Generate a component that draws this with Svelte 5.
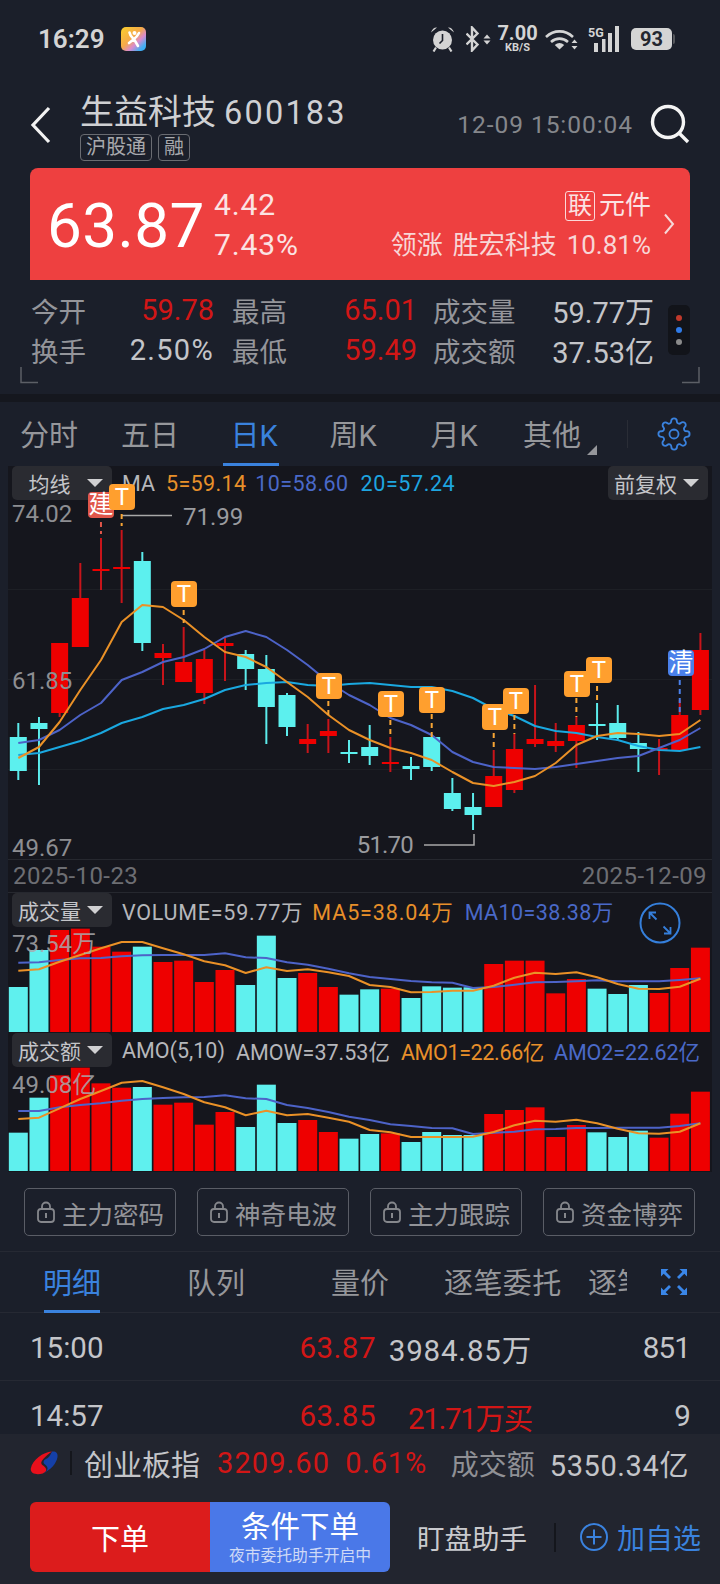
<script lang="ts">
	// x of the nth candle, shared by all three chart panels
	const cx = (i: number) => 18.3 + 20.67 * i;

	// hi, lo, bodyTop, bodyBottom, up
	const candles = [
		[723, 780, 737, 771, 0],
		[717, 785, 723, 729, 0],
		[643, 717, 643, 713, 1],
		[563, 647, 598, 647, 1],
		[538, 590, 569, 571, 1],
		[530, 603, 567, 569, 1],
		[552, 651, 561, 643, 0],
		[644, 685, 653, 658, 1],
		[627, 682, 662, 682, 1],
		[650, 704, 659, 693, 1],
		[638, 681, 643, 646, 1],
		[650, 690, 654, 669, 0],
		[655, 744, 669, 707, 0],
		[693, 736, 695, 727, 0],
		[724, 753, 739, 744, 1],
		[719, 753, 731, 736, 1],
		[740, 763, 752, 754, 0],
		[725, 765, 747, 756, 0],
		[737, 772, 762, 764, 1],
		[757, 780, 766, 769, 0],
		[737, 771, 737, 767, 0],
		[778, 811, 793, 809, 0],
		[793, 830, 807, 815, 0],
		[750, 807, 776, 807, 1],
		[734, 793, 749, 790, 1],
		[685, 747, 739, 744, 1],
		[723, 752, 741, 746, 1],
		[717, 768, 725, 741, 1],
		[703, 740, 724, 726, 0],
		[705, 741, 723, 738, 0],
		[732, 772, 743, 749, 0],
		[739, 775, 748, 750, 1],
		[700, 750, 715, 750, 1],
		[633, 715, 650, 710, 1]
	];

	const ma5 = [758, 747, 722, 690, 660, 622, 605, 607, 620, 637, 652, 657, 667, 682, 697, 715, 730, 740, 748, 753, 760, 772, 783, 786, 782, 776, 763, 745, 736, 733, 734, 736, 734, 720];
	const ma10 = [743, 740, 730, 715, 703, 680, 672, 662, 657, 649, 637, 631, 637, 650, 665, 682, 695, 705, 718, 725, 735, 752, 762, 767, 768, 769, 767, 764, 761, 758, 756, 748, 740, 728];
	const ma20 = [755, 753, 747, 741, 733, 723, 717, 709, 705, 699, 690, 685, 683, 682, 685, 686, 684, 683, 685, 687, 687, 691, 698, 709, 716, 726, 731, 733, 737, 740, 746, 750, 751, 747];

	const volTops = [291, 180, 120, 116, 170, 185, 170, 216, 212, 276, 240, 285, 137, 264, 249, 291, 314, 298, 296, 324, 289, 293, 292, 222, 212, 212, 310, 267, 296, 312, 285, 309, 234, 173];
	const volMa5 = [242, 238, 215, 195, 175, 156, 156, 175, 193, 214, 226, 249, 232, 243, 238, 247, 258, 285, 291, 307, 306, 302, 302, 287, 263, 248, 252, 247, 262, 282, 296, 297, 290, 266];
	const volMa10 = [218, 217, 210, 205, 204, 199, 196, 195, 195, 195, 190, 202, 204, 217, 224, 236, 250, 261, 267, 273, 277, 278, 294, 291, 284, 277, 276, 274, 271, 274, 274, 274, 270, 265];

	const amoTops = [728, 623, 556, 533, 580, 593, 591, 644, 638, 704, 666, 711, 584, 699, 690, 726, 746, 732, 730, 756, 726, 735, 735, 672, 660, 652, 741, 705, 727, 741, 722, 743, 671, 605];
	const amoMa1 = [687, 683, 655, 627, 603, 578, 573, 592, 612, 637, 652, 676, 662, 676, 672, 683, 695, 720, 727, 741, 741, 741, 740, 726, 706, 692, 695, 689, 700, 716, 730, 731, 725, 700];
	const amoMa2 = [663, 663, 652, 645, 640, 632, 627, 624, 622, 621, 616, 625, 627, 645, 654, 666, 680, 690, 703, 708, 714, 715, 732, 728, 725, 718, 717, 714, 714, 713, 713, 713, 708, 700];

	// trade markers on the candle chart: label, box x, box y, dash from, dash to
	const marks = [
		{ t: '建', x: 88, y: 492, i: 4, a: 522, b: 534, kind: 'jian' },
		{ t: 'T', x: 109, y: 484, i: 5, a: 514, b: 526, kind: 'tee' },
		{ t: 'T', x: 171, y: 581, i: 8, a: 610, b: 623, kind: 'tee' },
		{ t: 'T', x: 316, y: 673, i: 15, a: 701, b: 719, kind: 'tee' },
		{ t: 'T', x: 378, y: 691, i: 18, a: 720, b: 737, kind: 'tee' },
		{ t: 'T', x: 419, y: 687, i: 20, a: 714, b: 737, kind: 'tee' },
		{ t: 'T', x: 503, y: 688, i: 24, a: 715, b: 734, kind: 'tee' },
		{ t: 'T', x: 482, y: 704, i: 23, a: 733, b: 750, kind: 'tee' },
		{ t: 'T', x: 564, y: 671, i: 27, a: 698, b: 717, kind: 'tee' },
		{ t: 'T', x: 586, y: 657, i: 28, a: 686, b: 703, kind: 'tee' },
		{ t: '清', x: 668, y: 650, i: 32, a: 680, b: 715, kind: 'qing' }
	];

	const pts = (arr: number[], fy = (v: number) => v) => arr.map((v, i) => `${cx(i).toFixed(1)},${fy(v).toFixed(1)}`).join(' ');
	const zy = (z: number) => 890 + z / 3;
	const isUp = (i: number) => candles[i][4] === 1;

	const locks = ['主力密码', '神奇电波', '主力跟踪', '资金博弈'];
	const periods = [
		{ t: '分时', w: 58, l: 20 },
		{ t: '五日', w: 58, l: 121 },
		{ t: '日K', w: 48, l: 230, on: true },
		{ t: '周K', w: 50, l: 328 },
		{ t: '月K', w: 50, l: 429 },
		{ t: '其他', w: 58, l: 523 }
	];
</script>

<div class="page">
	<div class="status">
		<span class="clock">16:29</span>
		<svg class="appIcon" viewBox="0 0 25 24" width="25" height="24">
			<defs>
				<linearGradient id="appg" x1="0" y1="0" x2="1" y2="1">
					<stop offset="0" stop-color="#fbd02c" />
					<stop offset="0.45" stop-color="#f5a94a" />
					<stop offset="0.65" stop-color="#d98ad0" />
					<stop offset="0.85" stop-color="#45aef2" />
					<stop offset="1" stop-color="#2fa8f5" />
				</linearGradient>
			</defs>
			<rect width="25" height="24" rx="5" fill="url(#appg)" />
			<path d="M8.500 5.500c.5 3.500 3 5 5 7.500l3.500 6M18 6c-1.500 3-3.500 5-5.500 6.500L8 16" fill="none" stroke="#fff" stroke-width="2.600" stroke-linecap="round" />
			<circle cx="13.500" cy="6" r="2" fill="#fff" />
		</svg>
		<span class="spring"></span>
		<svg class="alarm" viewBox="0 0 25 26" width="25" height="26">
			<circle cx="12.500" cy="14" r="9.500" fill="#d4d4d4" />
			<path d="M12.500 8v6.500l-3 3" fill="none" stroke="#1b1f2a" stroke-width="1.600" />
			<path d="M1 6.500C2 3 4.500 1.200 7 1.500zM24 6.500C23 3 20.500 1.200 18 1.500z" fill="#d4d4d4" />
			<path d="M6 21.500L3.500 25.500M19 21.500l2.500 4" stroke="#d4d4d4" stroke-width="2.200" fill="none" />
		</svg>
		<svg class="bt" viewBox="0 0 25 26" width="25" height="26">
			<path d="M0.500 7.500l11 11-5.500 6V1.500l5.500 6-11 11" fill="none" stroke="#d4d4d4" stroke-width="2.400" />
			<path d="M21 8.500l3.500 4h-7zM21 18.500l3.500-4h-7z" fill="#d4d4d4" />
		</svg>
		<span class="speed"><b>7.00</b><i>KB/S</i></span>
		<svg class="wifi" viewBox="0 0 33 20" width="33" height="20">
			<path d="M1 7c8-7.500 19-7.500 27 0M6 12c5-4.500 12-4.500 17 0" fill="none" stroke="#d4d4d4" stroke-width="2.600" />
			<path d="M14.500 19.500L9.800 15c3-2.700 6.400-2.700 9.400 0z" fill="#d4d4d4" />
			<path d="M29.500 9.500l3 3.500h-6zM29.500 19.500l3-3.500h-6z" fill="#d4d4d4" />
		</svg>
		<svg class="signal" viewBox="0 0 32 26" width="32" height="26">
			<text x="0" y="11" class="fiveG">5G</text>
			<rect x="6" y="17" width="4" height="9" fill="#d4d4d4" />
			<rect x="14" y="13" width="3.500" height="13" fill="#d4d4d4" />
			<rect x="20" y="7" width="4" height="19" fill="#d4d4d4" />
			<rect x="27" y="0" width="4" height="26" fill="#d4d4d4" />
		</svg>
		<span class="battery">93</span>
	</div>

	<div class="head">
		<svg class="back" viewBox="0 0 22 38" width="22" height="38">
			<path d="M19 2L3 19l16 17" fill="none" stroke="#f2f2f2" stroke-width="3.200" />
		</svg>
		<div class="title">
			<div class="name">生益科技<span>600183</span></div>
			<div class="tags"><em>沪股通</em><em>融</em></div>
		</div>
		<span class="stamp">12-09 15:00:04</span>
		<svg class="search" viewBox="0 0 40 40" width="40" height="40">
			<circle cx="18" cy="18" r="15.500" fill="none" stroke="#f4f4f4" stroke-width="3.400" />
			<path d="M29 29l9 9" stroke="#f4f4f4" stroke-width="3.400" />
		</svg>
	</div>

	<div class="quote">
		<span class="last">63.87</span>
		<div class="chg"><span>4.42</span><span>7.43%</span></div>
		<div class="sector">
			<div class="sectorTop"><em>联</em>元件</div>
			<div class="sectorLead">领涨 胜宏科技 10.81%</div>
		</div>
		<svg class="chev" viewBox="0 0 12 22" width="12" height="22">
			<path d="M2 1.500l8 9.500-8 9.500" fill="none" stroke="#f6d8d8" stroke-width="2" />
		</svg>
	</div>

	<div class="stats">
		<div class="grid">
			<span class="lab">今开</span><span class="num red">59.78</span>
			<span class="lab p18">最高</span><span class="num red">65.01</span>
			<span class="lab p16">成交量</span><span class="num">59.77万</span>
			<span class="lab">换手</span><span class="num wide">2.50%</span>
			<span class="lab p18">最低</span><span class="num red">59.49</span>
			<span class="lab p16">成交额</span><span class="num">37.53亿</span>
		</div>
		<div class="dots"><i class="d1"></i><i class="d2"></i><i class="d3"></i></div>
		<svg class="corner left" viewBox="0 0 18 17" width="18" height="17"><path d="M1 0v15.500h17" fill="none" stroke="#5c5f66" stroke-width="1.500" /></svg>
		<svg class="corner right" viewBox="0 0 18 17" width="18" height="17"><path d="M17 0v15.500H0" fill="none" stroke="#5c5f66" stroke-width="1.500" /></svg>
	</div>

	<div class="strip"></div>

	<div class="periods">
		{#each periods as p}
			<span class="period" class:on={p.on} style={`left:${p.l}px;width:${p.w}px`}>{p.t}</span>
		{/each}
		<i class="more"></i>
		<i class="vsep"></i>
		<svg class="gear" viewBox="0 0 24 24" width="34" height="34">
			<path
				d="M12 8.800a3.200 3.200 0 1 0 0 6.400 3.200 3.200 0 0 0 0-6.400zM19.400 15a1.650 1.650 0 0 0 .33 1.820l.06.06a2 2 0 1 1-2.830 2.830l-.06-.06a1.650 1.650 0 0 0-2.800 1.170V21a2 2 0 0 1-4 0v-.09A1.650 1.650 0 0 0 7.300 19.700l-.06.06a2 2 0 1 1-2.830-2.830l.06-.06A1.650 1.650 0 0 0 3.290 14H3a2 2 0 0 1 0-4h.09A1.650 1.650 0 0 0 4.600 7.300l-.06-.06a2 2 0 1 1 2.830-2.830l.06.06A1.650 1.650 0 0 0 10 3.290V3a2 2 0 0 1 4 0v.09a1.650 1.650 0 0 0 2.800 1.170l.06-.06a2 2 0 1 1 2.830 2.830l-.06.06A1.650 1.650 0 0 0 20.910 10H21a2 2 0 0 1 0 4h-.09a1.650 1.650 0 0 0-1.510 1z"
				fill="none"
				stroke="#3a82de"
				stroke-width="1.300"
			/>
		</svg>
	</div>

	<div class="charts">
		<div class="panel main">
			<div class="legend">
				<span class="drop"><em>均线</em><i></i></span>
				<span class="w ml">MA</span>
				<span class="o s11 ls3">5=59.14</span>
				<span class="b s9 ls4">10=58.60</span>
				<span class="c s12 ls6">20=57.24</span>
				<span class="spring"></span>
				<span class="drop adj"><em>前复权</em><i></i></span>
			</div>
			<svg viewBox="8 466 704 394" width="704" height="394">
				<line x1="8" y1="589.500" x2="712" y2="589.500" class="gridline" />
				<line x1="8" y1="679.500" x2="712" y2="679.500" class="gridline" />
				<line x1="8" y1="769.500" x2="712" y2="769.500" class="gridline" />
				{#each candles as c, i}
					<line x1={cx(i)} x2={cx(i)} y1={c[0]} y2={c[1]} stroke={c[4] ? '#c8141a' : '#5cecec'} stroke-width="2" />
					<rect x={cx(i) - 8.500} y={c[2]} width="17" height={c[3] - c[2]} fill={c[4] ? '#ee0000' : '#5cf0ee'} />
				{/each}
				<polyline points={pts(ma20)} class="ln" stroke="#1aa8e0" />
				<polyline points={pts(ma10)} class="ln" stroke="#4d63c8" />
				<polyline points={pts(ma5)} class="ln" stroke="#ea9127" />
				<text x="12" y="522" class="axis">74.02</text>
				<text x="12" y="689" class="axis">61.85</text>
				<text x="12" y="856" class="axis">49.67</text>
				<path d="M122 515.500h50" class="tick" />
				<text x="183" y="525" class="axis hl">71.99</text>
				<path d="M424 845h50v-11" class="tick" />
				<text x="413" y="853" class="axis hl tight" text-anchor="end">51.70</text>
				{#each marks as m}
					<line x1={cx(m.i)} x2={cx(m.i)} y1={m.a} y2={m.b} class="dash {m.kind}" />
				{/each}
				{#each marks as m}
					<rect x={m.x} y={m.y} width="26" height="26" rx="4" class="badge {m.kind}" />
					<text x={m.x + 13} y={m.y + 21} class="badgeText" class:cjk={m.t !== 'T'}>{m.t}</text>
				{/each}
			</svg>
		</div>

		<div class="dates"><span>2025-10-23</span><span>2025-12-09</span></div>

		<div class="panel sub">
			<div class="legend">
				<span class="drop"><em>成交量</em><i></i></span>
				<span class="w ml ls8">VOLUME=59.77万</span>
				<span class="o s9 ls9">MA5=38.04万</span>
				<span class="b s11 ls4">MA10=38.38万</span>
			</div>
			<svg viewBox="8 893 704 139" width="704" height="139">
				{#each volTops as z, i}
					<rect x={cx(i) - 9.500} y={zy(z)} width="19" height={1032 - zy(z)} class={isUp(i) ? 'barUp' : 'barDown'} />
				{/each}
				<polyline points={pts(volMa10, zy)} class="ln" stroke="#4d63c8" />
				<polyline points={pts(volMa5, zy)} class="ln" stroke="#ea9127" />
				<text x="12" y="952" class="axis over">73.54万</text>
			</svg>
			<svg class="zoomOut" viewBox="0 0 42 42" width="42" height="42">
				<circle cx="21" cy="21" r="19.500" fill="none" stroke="#357fdb" stroke-width="2" />
				<path d="M10.500 10.500l7 7M10.500 17v-6.500h6.500M31.500 31.500l-7-7M31.500 25v6.500h-6.500" fill="none" stroke="#357fdb" stroke-width="1.800" />
			</svg>
		</div>

		<div class="panel sub amo">
			<div class="legend">
				<span class="drop"><em>成交额</em><i></i></span>
				<span class="w ml">AMO(5,10)</span>
				<span class="w s11">AMOW=37.53亿</span>
				<span class="o s11 lsn">AMO1=22.66亿</span>
				<span class="b s10 lsm">AMO2=22.62亿</span>
			</div>
			<svg viewBox="8 1033 704 139" width="704" height="139">
				{#each amoTops as z, i}
					<rect x={cx(i) - 9.500} y={zy(z)} width="19" height={1171 - zy(z)} class={isUp(i) ? 'barUp' : 'barDown'} />
				{/each}
				<polyline points={pts(amoMa2, zy)} class="ln" stroke="#4d63c8" />
				<polyline points={pts(amoMa1, zy)} class="ln" stroke="#ea9127" />
				<text x="12" y="1093" class="axis over">49.08亿</text>
			</svg>
		</div>
	</div>

	<div class="locks">
		{#each locks as l}
			<div class="lock">
				<svg viewBox="0 0 18 22" width="18" height="22">
					<rect x="1" y="8" width="16" height="13" rx="3" fill="none" stroke="#85878c" stroke-width="1.800" />
					<path d="M5 8V5.500a4 4 0 0 1 8 0V8" fill="none" stroke="#85878c" stroke-width="1.800" />
					<rect x="8" y="12" width="2" height="5" fill="#85878c" />
				</svg>
				<span>{l}</span>
			</div>
		{/each}
	</div>

	<div class="detailTabs">
		<span class="dt on">明细</span>
		<span class="dt tab2">队列</span>
		<span class="dt tab3">量价</span>
		<span class="dt tab4">逐笔委托</span>
		<span class="dt tab5">逐笔成交</span>
		<svg class="expand" viewBox="0 0 28 28" width="28" height="28">
			<path d="M1 1h7.500L5.800 3.700 11 9 9 11 3.700 5.800 1 8.500zM27 1v7.500l-2.700-2.700L19 11l-2-2 5.300-5.300L19.500 1zM1 27v-7.500l2.700 2.700L9 17l2 2-5.300 5.300L8.500 27zM27 27h-7.500l2.700-2.700L17 19l2-2 5.300 5.300 2.700-2.800z" fill="#3a86e8" />
		</svg>
	</div>

	<div class="rows">
		<div class="row">
			<span class="tm">15:00</span>
			<span class="px red">63.87</span>
			<span class="amt">3984.85万</span>
			<span class="cnt">851</span>
		</div>
		<div class="row">
			<span class="tm">14:57</span>
			<span class="px red">63.85</span>
			<span class="amt red tight">21.71万买</span>
			<span class="cnt">9</span>
		</div>
	</div>

	<div class="dock">
		<div class="ticker">
			<svg class="logo" viewBox="0 0 28 24" width="28" height="24">
				<path d="M22 .5C13 1 2.500 9 .8 17.500c-.8 5 5.500 7 12 5 6-2.500 3-6.500-.5-8.500-3-2 .5-7 9.700-13.500z" fill="#e8101c" />
				<path d="M22 .5c4-.4 6 1.500 5.500 5.500-1 6.500-7 13-14.500 16.500 6-3 5.500-6.500 2-9-2.500-1.800-1.500-4.500 1-5.500 2.500-1 4.500-4 6-7.500z" fill="#1540a8" />
			</svg>
			<i class="logoSep"></i>
			<span class="idx">创业板指</span>
			<span class="idxVal red">3209.60</span>
			<span class="idxPct red">0.61%</span>
			<span class="spring"></span>
			<span class="idxLab">成交额</span>
			<span class="idxAmt">5350.34亿</span>
		</div>
		<div class="actions">
			<div class="buy">下单</div>
			<div class="cond">
				<span class="condMain">条件下单</span>
				<span class="condSub">夜市委托助手开启中</span>
			</div>
			<span class="watch">盯盘助手</span>
			<i class="actSep"></i>
			<svg class="plus" viewBox="0 0 28 28" width="28" height="28">
				<circle cx="14" cy="14" r="13" fill="none" stroke="#3a82de" stroke-width="2" />
				<path d="M14 6.500v15M6.500 14h15" stroke="#3a82de" stroke-width="2" />
			</svg>
			<span class="addFav">加自选</span>
		</div>
	</div>
</div>

<style>
	:global(body) {
		margin: 0;
		background: #1b1f2a;
	}

	.page {
		position: relative;
		width: 720px;
		height: 1584px;
		overflow: hidden;
		background: #1b1f2a;
		color: #c9cace;
		font-family: Roboto, 'Noto Sans CJK SC', sans-serif;
		display: flex;
		flex-direction: column;
	}

	em,
	i {
		font-style: normal;
	}

	.spring {
		flex: 1;
	}

	.red {
		color: #d21616;
	}

	.status {
		height: 80px;
		flex: none;
		display: flex;
		align-items: center;
		padding: 0 48px 2px 38px;
		box-sizing: border-box;
		position: relative;
	}

	.clock {
		font-size: 26px;
		font-weight: 600;
		color: #d4d4d4;
		width: 83px;
	}

	.alarm {
		margin-right: 11px;
	}

	.bt {
		margin-right: 8px;
	}

	.speed {
		display: flex;
		flex-direction: column;
		align-items: center;
		width: 37px;
		margin-right: 9px;
		color: #d4d4d4;
		line-height: 1;
	}

	.speed b {
		font-size: 20px;
		font-weight: 700;
		line-height: 17px;
	}

	.speed i {
		font-size: 11px;
		font-weight: 700;
		line-height: 11px;
	}

	.wifi {
		margin: 2px 10px 0 0;
	}

	.signal {
		margin-right: 11px;
	}

	.fiveG {
		font-size: 12.500px;
		font-weight: 700;
		fill: #d4d4d4;
	}

	.battery {
		width: 41px;
		height: 22px;
		border-radius: 5px;
		background: #d4d4d4;
		color: #23262f;
		font-size: 20px;
		font-weight: 700;
		line-height: 22px;
		text-align: center;
		position: relative;
	}

	.battery::after {
		content: '';
		position: absolute;
		left: 42px;
		top: 6px;
		width: 2px;
		height: 10px;
		background: #55575c;
		border-radius: 0 2px 2px 0;
	}

	.head {
		height: 88px;
		flex: none;
		display: flex;
		padding: 0 30px;
		position: relative;
	}

	.back {
		margin: 26px 28px 0 0;
	}

	.title {
		display: flex;
		flex-direction: column;
	}

	.name {
		font-size: 34px;
		line-height: 44px;
		margin-top: 10px;
		color: #cfd0d3;
	}

	.name span {
		font-size: 32.500px;
		margin-left: 8px;
		letter-spacing: 2.200px;
	}

	.tags {
		display: flex;
		gap: 6px;
		margin-top: -1px;
	}

	.tags em {
		border: 1px solid #6a6c72;
		border-radius: 4px;
		font-size: 20px;
		line-height: 25px;
		padding: 0 5px;
		color: #a8a9ad;
	}

	.stamp {
		margin: 30px 0 0 auto;
		font-size: 24.500px;
		line-height: 30px;
		height: 30px;
		color: #85878c;
		letter-spacing: 0.95px;
	}

	.search {
		margin: 24px 0 0 17px;
	}

	.quote {
		height: 112px;
		flex: none;
		margin: 0 30px;
		box-sizing: border-box;
		padding-left: 17px;
		border-radius: 8px 8px 0 0;
		background: #ee4040;
		color: #fff;
		display: flex;
		align-items: center;
	}

	.last {
		font-size: 62px;
		line-height: 1;
		width: 167px;
		letter-spacing: 0.4px;
		margin-top: 4px;
	}

	.chg {
		display: flex;
		flex-direction: column;
		font-size: 30px;
		line-height: 40px;
		color: #fbe3e3;
		letter-spacing: 0.9px;
		margin-top: 1px;
	}

	.sector {
		margin-left: auto;
		display: flex;
		flex-direction: column;
		align-items: flex-end;
		margin-right: 6px;
		color: #f8d6d6;
		margin-top: 2px;
	}

	.sectorTop {
		font-size: 26px;
		line-height: 40px;
		color: #fbe3e3;
	}

	.sectorTop em {
		display: inline-block;
		border: 1px solid #fbd9d9;
		border-radius: 3px;
		font-size: 24px;
		line-height: 28px;
		width: 28px;
		text-align: center;
		margin-right: 4px;
	}

	.sectorLead {
		font-size: 26px;
		line-height: 40px;
		word-spacing: 3.500px;
	}

	.chev {
		margin: 0 15px 0 6px;
	}

	.stats {
		height: 114px;
		flex: none;
		position: relative;
		padding-top: 10px;
		box-sizing: border-box;
	}

	.grid {
		display: grid;
		grid-template-columns: 86px 128px 75px 128px 99px 138px;
		grid-auto-rows: 40px;
		align-items: center;
	}

	.grid .lab:nth-child(6n + 1) {
		padding-left: 31px;
	}

	.lab {
		font-size: 27.500px;
		color: #94959a;
		white-space: nowrap;
	}

	.p18 {
		padding-left: 18px;
	}

	.p16 {
		padding-left: 16px;
	}

	.num {
		font-size: 29px;
		text-align: right;
		white-space: nowrap;
	}

	.num.wide {
		letter-spacing: 1.300px;
	}

	.num:not(.red) {
		color: #c4c5c9;
	}

	.dots {
		position: absolute;
		left: 668px;
		top: 25px;
		width: 22px;
		height: 50px;
		border-radius: 5px;
		background: #12141a;
	}

	.dots i {
		position: absolute;
		left: 8px;
		width: 6px;
		height: 6px;
		border-radius: 50%;
	}

	.d1 {
		top: 10px;
		background: #c0392b;
	}

	.d2 {
		top: 22px;
		background: #2f7be8;
	}

	.d3 {
		top: 34px;
		background: #8b8b8b;
	}

	.corner {
		position: absolute;
		top: 87px;
	}

	.corner.left {
		left: 20px;
	}

	.corner.right {
		left: 682px;
	}

	.strip {
		height: 8px;
		flex: none;
		background: #15171e;
	}

	.periods {
		position: relative;
		height: 64px;
		flex: none;
	}

	.period {
		position: absolute;
		top: 14px;
		font-size: 29px;
		line-height: 40px;
		text-align: center;
		color: #96979b;
		white-space: nowrap;
	}

	.period.on {
		color: #3a82de;
	}

	.period.on::after {
		content: '';
		position: absolute;
		left: -7px;
		right: -1px;
		top: 47px;
		height: 3px;
		background: #3a82de;
	}

	.more {
		position: absolute;
		left: 587px;
		top: 43px;
		border-left: 10px solid transparent;
		border-bottom: 10px solid #96979b;
	}

	.vsep {
		position: absolute;
		left: 627px;
		top: 18px;
		width: 1px;
		height: 28px;
		background: #2a2d36;
	}

	.gear {
		position: absolute;
		left: 657px;
		top: 15px;
	}

	.charts {
		flex: none;
		margin-left: 8px;
		width: 704px;
		background: #15161d;
		display: flex;
		flex-direction: column;
	}

	.panel {
		position: relative;
	}

	.panel svg {
		display: block;
		position: relative;
		overflow: visible;
	}

	.main {
		height: 394px;
		border-bottom: 1px solid #26282f;
		box-sizing: border-box;
	}

	.sub {
		height: 139px;
	}

	.amo {
		margin-top: 1px;
	}

	.legend {
		position: absolute;
		left: 4px;
		right: 4px;
		top: 0;
		height: 34px;
		display: flex;
		align-items: center;
		font-size: 21.500px;
		white-space: nowrap;
	}

	.sub .legend {
		top: 0;
	}

	.drop {
		display: flex;
		align-items: center;
		box-sizing: border-box;
		width: 100px;
		height: 34px;
		padding-right: 9px;
		border-radius: 5px;
		background: #2a2b31;
		color: #c4c5c9;
		font-size: 21px;
	}

	.drop em {
		flex: 1;
		text-align: center;
	}

	.drop i {
		border: 8px solid transparent;
		border-top: 8px solid #d0d0d2;
		border-bottom: 0;
	}

	.ml {
		margin-left: 10px;
	}

	.s9 {
		margin-left: 9px;
	}

	.s10 {
		margin-left: 10px;
	}

	.s11 {
		margin-left: 11px;
	}

	.s12 {
		margin-left: 12px;
	}

	.ls3 {
		letter-spacing: 0.35px;
	}

	.ls4 {
		letter-spacing: 0.4px;
	}

	.ls6 {
		letter-spacing: 0.6px;
	}

	.ls8 {
		letter-spacing: 0.75px;
	}

	.ls9 {
		letter-spacing: 0.9px;
	}

	.lsn {
		letter-spacing: -0.35px;
	}

	.lsm {
		letter-spacing: -0.1px;
	}

	.w {
		color: #b6b7bb;
	}

	.o {
		color: #e8902a;
	}

	.b {
		color: #4a69c8;
	}

	.c {
		color: #1ea5e0;
	}

	.gridline {
		stroke: #1d1f25;
		stroke-width: 1;
	}

	.ln {
		fill: none;
		stroke-width: 2;
		stroke-linejoin: round;
	}

	.axis {
		font-size: 24px;
		fill: #8d8e92;
	}

	.axis.hl {
		fill: #9a9b9f;
	}

	.axis.tight {
		letter-spacing: -0.8px;
	}

	.axis.over {
		fill: #a9a9ad;
		fill-opacity: 0.85;
	}

	.tick {
		fill: none;
		stroke: #a8a8a8;
		stroke-width: 1.500;
	}

	.dash {
		stroke-width: 2;
		stroke-dasharray: 5 4;
		stroke: #f7a535;
	}

	.dash.jian {
		stroke: #e0564a;
	}

	.dash.qing {
		stroke: #4a80ea;
	}

	.badge {
		fill: #ff9f2e;
	}

	.badge.jian {
		fill: #e0564a;
	}

	.badge.qing {
		fill: #4a80ea;
	}

	.badgeText {
		font-size: 24px;
		fill: #fff;
		text-anchor: middle;
	}

	.badgeText.cjk {
		font-size: 25px;
	}

	.barUp {
		fill: #ee0000;
	}

	.barDown {
		fill: #5ff0ee;
	}

	.dates {
		height: 33px;
		box-sizing: border-box;
		border-bottom: 1px solid #26282f;
		padding: 0 5px;
		display: flex;
		align-items: center;
		justify-content: space-between;
		font-size: 24px;
		letter-spacing: 0.4px;
		color: #6d6e73;
	}

	.zoomOut {
		position: absolute !important;
		left: 631px;
		top: 9px;
	}

	.locks {
		height: 80px;
		flex: none;
		box-sizing: border-box;
		padding: 16px 25px 0 24px;
		border-bottom: 1px solid #262933;
		display: flex;
		justify-content: space-between;
	}

	.lock {
		width: 152px;
		height: 48px;
		box-sizing: border-box;
		border: 1px solid #5a5d66;
		border-radius: 5px;
		display: flex;
		align-items: center;
		gap: 7px;
		padding-left: 12px;
		font-size: 25.500px;
		color: #929398;
	}

	.detailTabs {
		position: relative;
		height: 61px;
		flex: none;
		box-sizing: border-box;
		border-bottom: 1px solid #262933;
		display: flex;
		align-items: center;
		padding-top: 4px;
	}

	.dt {
		flex: none;
		font-size: 29px;
		line-height: 40px;
		color: #96979b;
		white-space: nowrap;
		position: relative;
		width: 58px;
	}

	.dt.on {
		color: #3a82de;
		margin-left: 43px;
	}

	.dt.on::after {
		content: '';
		position: absolute;
		left: 1px;
		right: 1px;
		top: 46px;
		height: 3px;
		background: #3a82de;
	}

	.tab2 {
		margin-left: 86px;
	}

	.tab3 {
		margin-left: 86px;
	}

	.tab4 {
		margin-left: 55px;
		width: 116px;
		letter-spacing: 0.4px;
	}

	.tab5 {
		margin-left: 28px;
		width: 39px;
		overflow: hidden;
	}

	.expand {
		position: absolute;
		left: 660px;
		top: 16px;
	}

	.rows {
		flex: none;
	}

	.row {
		height: 68px;
		box-sizing: border-box;
		border-bottom: 1px solid #262933;
		display: grid;
		grid-template-columns: 200px 146px 156px 158px;
		padding: 3px 0 0 30px;
		align-items: center;
		font-size: 29.500px;
		color: #c4c5c9;
	}

	.row > span {
		white-space: nowrap;
	}

	.px,
	.amt,
	.cnt {
		text-align: right;
	}

	.px {
		letter-spacing: 0.5px;
	}

	.amt {
		letter-spacing: 0.8px;
	}

	.amt.tight {
		letter-spacing: -1.300px;
	}

	.cnt {
		letter-spacing: -0.8px;
	}

	.row .red {
		color: #d21616;
	}

	.dock {
		position: absolute;
		left: 0;
		right: 0;
		top: 1434px;
		height: 150px;
		background: #22252f;
	}

	.ticker {
		height: 58px;
		padding: 0 31px 0 30px;
		display: flex;
		align-items: center;
	}

	.logo {
		margin-right: 12px;
	}

	.logoSep {
		width: 2px;
		height: 24px;
		background: #14161c;
		margin-right: 12px;
	}

	.idx {
		font-size: 29px;
		color: #c4c5c9;
		margin-right: 17px;
	}

	.idxVal,
	.idxPct {
		font-size: 29px;
		color: #d21616;
		letter-spacing: 1.100px;
	}

	.idxPct {
		margin-left: 15px;
		letter-spacing: 0.8px;
	}

	.idxLab {
		font-size: 28px;
		color: #8f9095;
		margin-right: 15px;
	}

	.idxAmt {
		font-size: 29px;
		color: #c4c5c9;
		letter-spacing: 0.6px;
	}

	.actions {
		height: 70px;
		margin-top: 10px;
		padding-left: 30px;
		display: flex;
		align-items: center;
	}

	.buy,
	.cond {
		width: 180px;
		height: 70px;
		color: #fff;
		display: flex;
		flex-direction: column;
		align-items: center;
		justify-content: center;
	}

	.buy {
		background: #dc1c1c;
		border-radius: 6px 0 0 6px;
		font-size: 29px;
	}

	.cond {
		background: #4a78e8;
		border-radius: 0 6px 6px 0;
	}

	.condMain {
		font-size: 29.500px;
		line-height: 38px;
	}

	.condSub {
		font-size: 15.800px;
		line-height: 20px;
		color: #cfdaf6;
	}

	.watch {
		margin-left: 27px;
		font-size: 27.500px;
		color: #c9cace;
	}

	.actSep {
		width: 2px;
		height: 29px;
		margin: 0 24px 0 27px;
		background: #14161c;
	}

	.plus {
		margin-right: 9px;
	}

	.addFav {
		font-size: 28px;
		color: #3a82de;
	}
</style>
